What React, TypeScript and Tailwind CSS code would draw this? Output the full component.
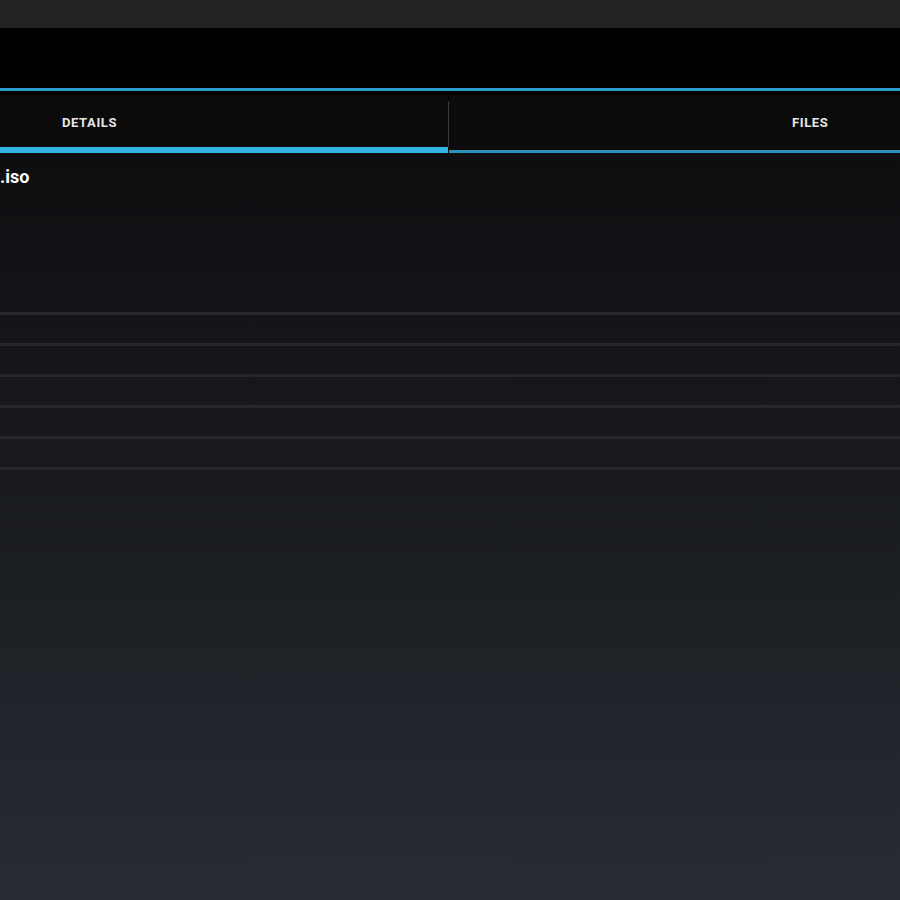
const rows = [0, 1, 2, 3, 4, 5];

export default function App() {
  return (
    <div className="flex h-[900px] w-[900px] flex-col overflow-hidden bg-black font-['Roboto',sans-serif]">
      {/* status bar */}
      <div className="h-[28px] shrink-0 bg-[#222222]" />
      {/* action bar */}
      <div className="h-[60px] shrink-0 bg-black" />
      <div className="h-[3px] shrink-0 bg-[#2a9ccb]" />

      {/* tabs */}
      <div className="flex h-[62px] shrink-0 flex-col bg-black pt-[4px]">
        <div className="flex flex-1">
          <div className="flex w-[448px] flex-col bg-[#0b0b0c]">
            <div className="flex flex-1 items-center pl-[62px] pt-[3px] text-[13px] font-bold tracking-[0.6px] text-[#e6e6e6]">
              DETAILS
            </div>
            <div className="h-[6px] bg-[#33b5e5]" />
          </div>
          <div className="my-[6px] w-px bg-[#3a3a3a]" />
          <div className="flex flex-1 flex-col bg-[#0b0b0c]">
            <div className="flex flex-1 items-center pl-[343px] pt-[3px] text-[13px] font-bold tracking-[0.6px] text-[#e6e6e6]">
              FILES
            </div>
            <div className="mt-[3px] h-[3px] bg-[#2a92bb]" />
          </div>
        </div>
      </div>

      {/* content */}
      <div className="flex flex-1 flex-col bg-gradient-to-b from-[#0d0e10] to-[#282c33]">
        <div className="pt-[12px] text-[18px] font-bold leading-[24px] text-white">.iso</div>
        <div className="mt-[123px] flex flex-col">
          {rows.map((r) => (
            <div key={r} className="flex h-[31px] flex-col">
              <div className="h-[3px] bg-[#25272b]" />
              <div className="flex-1" />
            </div>
          ))}
        </div>
      </div>
    </div>
  );
}
